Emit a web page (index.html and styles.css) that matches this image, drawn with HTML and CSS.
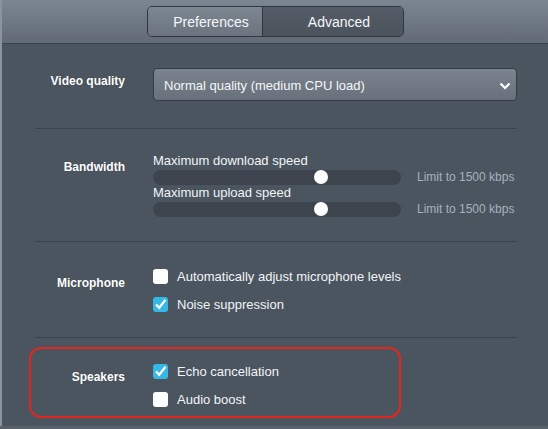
FILE: index.html
```html
<!DOCTYPE html>
<html>
<head>
<meta charset="utf-8">
<link rel="stylesheet" href="styles.css">
</head>
<body>
<div class="window">
  <header class="header">
    <div class="tabs">
      <div class="tab tab-pref">Preferences</div>
      <div class="tab tab-adv">Advanced</div>
    </div>
  </header>
  <main class="content">
    <section class="section sec-video">
      <div class="label">Video quality</div>
      <div class="control">
        <div class="select">
          <span>Normal quality (medium CPU load)</span>
          <svg class="chev" width="12" height="8" viewBox="0 0 12 8"><path d="M1.5 1.5 L6 6 L10.5 1.5" fill="none" stroke="#fff" stroke-width="2.2"/></svg>
        </div>
      </div>
    </section>
    <section class="section sec-bw">
      <div class="label">Bandwidth</div>
      <div class="control">
        <div class="slider-label">Maximum download speed</div>
        <div class="slider-row">
          <div class="track"><div class="thumb" style="left: 67.7%"></div></div>
          <div class="limit">Limit to 1500 kbps</div>
        </div>
        <div class="slider-label">Maximum upload speed</div>
        <div class="slider-row">
          <div class="track"><div class="thumb" style="left: 67.7%"></div></div>
          <div class="limit">Limit to 1500 kbps</div>
        </div>
      </div>
    </section>
    <section class="section sec-mic">
      <div class="label">Microphone</div>
      <div class="control">
        <div class="check-row"><span class="box"></span><span>Automatically adjust microphone levels</span></div>
        <div class="check-row"><span class="box checked"><svg width="15" height="15" viewBox="0 0 15 15"><path d="M3 7.5 L6.2 10.8 L12.5 2.8" fill="none" stroke="#fff" stroke-width="2.2"/></svg></span><span>Noise suppression</span></div>
      </div>
    </section>
    <section class="section sec-spk">
      <div class="highlight"></div>
      <div class="label">Speakers</div>
      <div class="control">
        <div class="check-row"><span class="box checked"><svg width="15" height="15" viewBox="0 0 15 15"><path d="M3 7.5 L6.2 10.8 L12.5 2.8" fill="none" stroke="#fff" stroke-width="2.2"/></svg></span><span>Echo cancellation</span></div>
        <div class="check-row"><span class="box"></span><span>Audio boost</span></div>
      </div>
    </section>
  </main>
</div>
</body>
</html>
```
FILE: styles.css
```css
html, body {
  margin: 0;
  padding: 0;
  width: 548px;
  height: 429px;
  overflow: hidden;
  background: #59626b;
  font-family: "Liberation Sans", Arial, sans-serif;
}
.window {
  height: 426px;
  border-left: 2px solid #8c939a;
  background: #4b5560;
  display: flex;
  flex-direction: column;
}
.header {
  height: 44px;
  border-bottom: 1px solid #3a4148;
  background: linear-gradient(#7c8690, #626b75);
  display: flex;
  justify-content: center;
  padding-top: 6px;
  box-sizing: border-box;
}
.tabs {
  display: flex;
  height: 31px;
  border: 1px solid #30363c;
  border-radius: 5px;
  overflow: hidden;
  box-sizing: border-box;
  margin-left: 1px;
}
.tab {
  display: flex;
  align-items: center;
  justify-content: center;
  color: #f4f6f8;
  font-size: 14px;
  padding: 1px 0 0 12px;
  box-sizing: border-box;
}
.tab-pref {
  width: 115px;
  background: linear-gradient(#7d8791, #6b747e);
  border-right: 1px solid #30363c;
}
.tab-adv {
  width: 140px;
  background: linear-gradient(#545d67, #4b535c);
}
.content {
  padding: 0 31px 0 33px;
  position: relative;
}
.section {
  display: flex;
  align-items: flex-start;
  border-bottom: 1px solid #3b424a;
  position: relative;
}
.section:last-child {
  border-bottom: none;
}
.label {
  width: 90px;
  text-align: right;
  color: #ffffff;
  font-weight: bold;
  font-size: 12px;
  line-height: 16px;
  flex-shrink: 0;
  text-shadow: 0 0 1px rgba(0,0,0,0.3);
}
.control {
  margin-left: 28px;
  flex: 1;
  color: #f2f4f6;
  font-size: 13px;
}
.sec-video {
  padding: 24px 0 27px;
}
.sec-video .label {
  padding-top: 5px;
}
.select {
  height: 33px;
  box-sizing: border-box;
  border: 1px solid #353b41;
  border-radius: 4px;
  background: linear-gradient(#7b848e, #68717b);
  display: flex;
  align-items: center;
  justify-content: space-between;
  padding: 1px 5px 0 10px;
  color: #f4f6f8;
  font-size: 13px;
}
.chev {
  margin-top: 1px;
}
.sec-bw {
  padding: 24px 0 24px;
}
.sec-bw .label {
  padding-top: 6px;
}
.slider-label {
  line-height: 16px;
  height: 16px;
}
.slider-row {
  display: flex;
  align-items: center;
  height: 16px;
}
.track {
  width: 248px;
  height: 15px;
  border-radius: 8px;
  background: #3d444d;
  position: relative;
  flex-shrink: 0;
}
.thumb {
  position: absolute;
  top: 50%;
  width: 14px;
  height: 14px;
  margin: -7px 0 0 -7px;
  border-radius: 50%;
  background: #ffffff;
}
.limit {
  margin-left: 16px;
  color: #a9b1ba;
  font-size: 12px;
}
.sec-mic {
  padding: 20px 0 19px;
}
.sec-mic .label {
  padding-top: 13px;
}
.sec-spk .label {
  padding-top: 12px;
}
.sec-spk {
  padding: 19px 0 0;
}
.check-row {
  display: flex;
  align-items: center;
  height: 28px;
}
.box {
  width: 15px;
  height: 15px;
  border-radius: 3px;
  background: #ffffff;
  margin-right: 9px;
  flex-shrink: 0;
  display: flex;
}
.box.checked {
  background: #36b8e6;
}
.highlight {
  position: absolute;
  left: -6px;
  top: 9px;
  width: 372px;
  height: 71px;
  box-sizing: border-box;
  border: 2px solid #e3261d;
  border-radius: 12px;
  pointer-events: none;
}
```
